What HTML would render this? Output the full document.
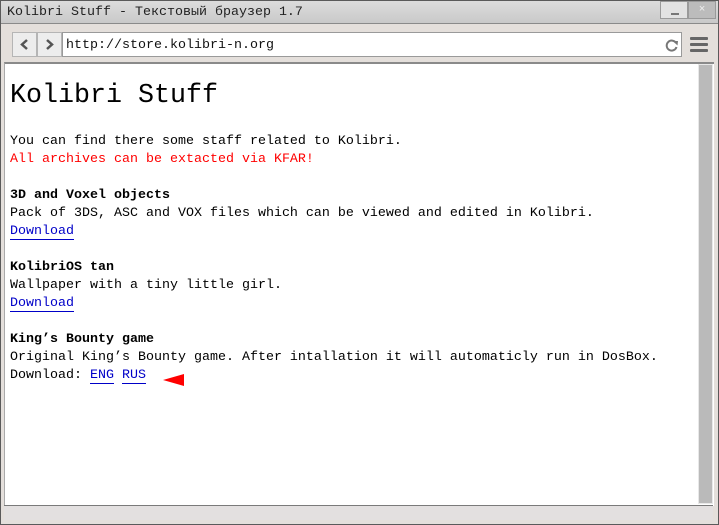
<!DOCTYPE html>
<html><head><meta charset="utf-8"><style>
*{margin:0;padding:0;box-sizing:border-box}
body{width:719px;height:525px;overflow:hidden;background:#ddd6ce;position:relative;font-family:"Liberation Mono","DejaVu Sans Mono",monospace}
.frame{position:absolute;left:0;top:0;width:719px;height:525px;border:1px solid #5a5a5a;background:#e4dfdb}
.title{position:absolute;left:1px;top:1px;width:717px;height:23px;background:linear-gradient(#dcdcdc,#c9c9c9);border-bottom:1px solid #8a8a8a;font-size:13.33px;color:#222;padding:4px 0 0 6px;line-height:15px}
.wb{position:absolute;top:1px;height:18px;width:28px;border:1px solid #9a9a9a;background:#dadada}
.btn{position:absolute;top:32px;width:25px;height:25px;border:1px solid #b5b5b5;background:#ededed}
.url{position:absolute;left:62px;top:32px;width:620px;height:25px;border:1px solid #9a9a9a;background:#fff;font-size:13.33px;padding:5px 0 0 3px;color:#111}
.content{position:absolute;left:4px;top:62px;width:710px;height:444px;background:#fff;border-top:2px solid #8a8a8a;border-left:1px solid #aaa}
.sb{position:absolute;left:698px;top:64px;width:15px;height:440px;background:#bababa;border:1px solid #e8e8e8}
.status{position:absolute;left:4px;top:505px;width:709px;height:15px;background:#e3e0e0;border-top:1px solid #7a7a7a}
.page{position:absolute;left:10px;top:77px;font-size:13.33px;line-height:18px;color:#000;white-space:pre}
h1{font-size:26.67px;font-weight:normal;line-height:38px;margin-bottom:18px;letter-spacing:0}
a{color:#0000c8;text-decoration:none;border-bottom:1px solid #0000c8}
.r{color:#f00}
b{font-weight:bold}
</style></head><body>
<div class="frame"></div>
<div class="title">Kolibri Stuff - Текстовый браузер 1.7</div>
<div class="wb" style="left:660px;background:#e2e2e2"><div style="position:absolute;left:10px;top:11px;width:8px;height:2px;background:#777"></div></div>
<div class="wb" style="left:688px;width:28px;background:#bcbcbc;color:#eee;font-size:11px;text-align:center;line-height:16px">×</div>
<div class="btn" style="left:12px"><svg width="23" height="23"><path d="M14 7 L9 11.5 L14 16" stroke="#555" stroke-width="2.5" fill="none"/></svg></div>
<div class="btn" style="left:37px"><svg width="23" height="23"><path d="M9 7 L14 11.5 L9 16" stroke="#555" stroke-width="2.5" fill="none"/></svg></div>
<div class="url">http://store.kolibri-n.org
<svg style="position:absolute;left:601px;top:4px" width="16" height="16"><path d="M12 6 A5 5 0 1 0 12.5 10" stroke="#777" stroke-width="2" fill="none"/><path d="M9 4 L14 4 L13.5 8.5 Z" fill="#777"/></svg></div>
<div style="position:absolute;left:690px;top:37px;width:18px;height:3px;background:#666;border-radius:1px"></div>
<div style="position:absolute;left:690px;top:43px;width:18px;height:3px;background:#666;border-radius:1px"></div>
<div style="position:absolute;left:690px;top:49px;width:18px;height:3px;background:#666;border-radius:1px"></div>
<div class="content"></div>
<div class="sb"></div>
<div class="status"></div>
<div class="page"><h1>Kolibri Stuff</h1>You can find there some staff related to Kolibri.
<span class="r">All archives can be extacted via KFAR!</span>

<b>3D and Voxel objects</b>
Pack of 3DS, ASC and VOX files which can be viewed and edited in Kolibri.
<a>Download</a>

<b>KolibriOS tan</b>
Wallpaper with a tiny little girl.
<a>Download</a>

<b>King’s Bounty game</b>
Original King’s Bounty game. After intallation it will automaticly run in DosBox.
Download: <a>ENG</a> <a>RUS</a></div>
<svg style="position:absolute;left:163px;top:373px" width="22" height="14"><path d="M0 7 L21 1 L21 13 Z" fill="#f00"/></svg>
</body></html>
